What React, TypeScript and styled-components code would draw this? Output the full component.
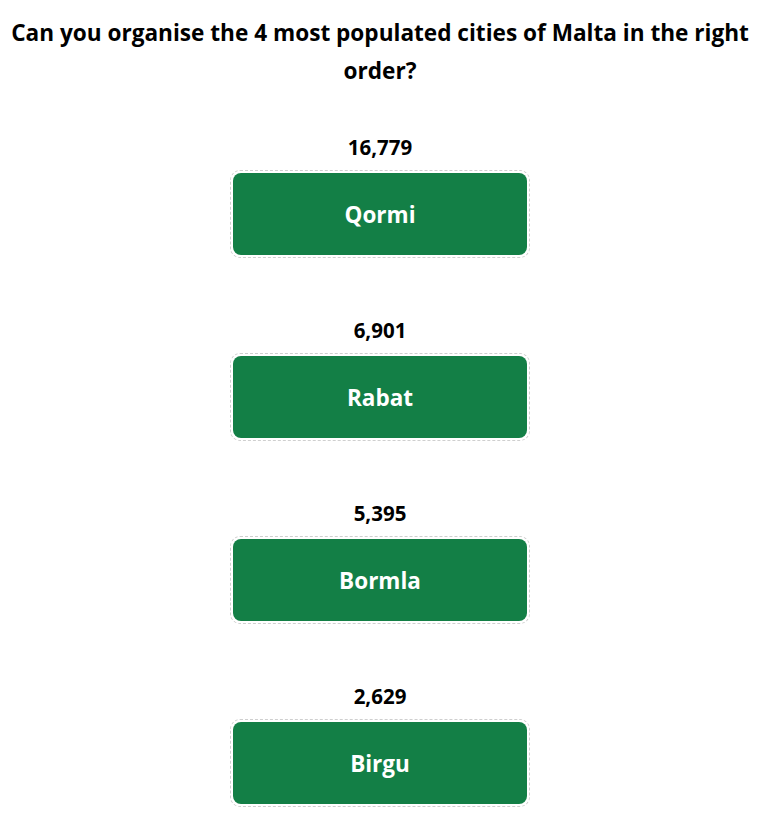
import React from "react";
import styled, { createGlobalStyle } from "styled-components";

interface ICity {
  name: string;
  population: string;
}

const cities: ICity[] = [
  { name: "Qormi", population: "16,779" },
  { name: "Rabat", population: "6,901" },
  { name: "Bormla", population: "5,395" },
  { name: "Birgu", population: "2,629" },
];

const GlobalStyle = createGlobalStyle`
  body {
    margin: 0;
    background: #ffffff;
    font-family: "Open Sans", "Noto Sans", sans-serif;
    color: #000000;
  }
`;

// the right side leaves room the original gave to a scrollbar
const Page = styled.div`
  width: 744px;
  padding: 0 20px 0 8px;
  display: flex;
  flex-direction: column;
  align-items: center;
`;

const Title = styled.h1`
  margin: 14px 0 45px;
  font-size: 22.6px;
  line-height: 38px;
  font-weight: 700;
  text-align: center;
  width: 100%;
`;

const List = styled.div`
  display: flex;
  flex-direction: column;
  align-items: center;
  gap: 60px;
`;

const Item = styled.div`
  display: flex;
  flex-direction: column;
  align-items: center;
  gap: 11px;
`;

const Population = styled.div`
  font-size: 20.5px;
  line-height: 24px;
  font-weight: 700;
`;

const Slot = styled.div`
  box-sizing: border-box;
  width: 300px;
  height: 88px;
  padding: 2px;
  border: 1px dashed #cfcfcf;
  border-radius: 10px;
`;

const CityButton = styled.button`
  width: 100%;
  height: 100%;
  border: none;
  border-radius: 8px;
  background: #137f46;
  color: #ffffff;
  font-family: inherit;
  font-size: 22.5px;
  font-weight: 700;
  display: flex;
  align-items: center;
  justify-content: center;
  cursor: grab;
`;

const App: React.FC = () => {
  return (
    <Page>
      <GlobalStyle />
      <Title>Can you organise the 4 most populated cities of Malta in the right order?</Title>
      <List>
        {cities.map((city) => (
          <Item key={city.name}>
            <Population>{city.population}</Population>
            <Slot>
              <CityButton>{city.name}</CityButton>
            </Slot>
          </Item>
        ))}
      </List>
    </Page>
  );
};

export default App;
